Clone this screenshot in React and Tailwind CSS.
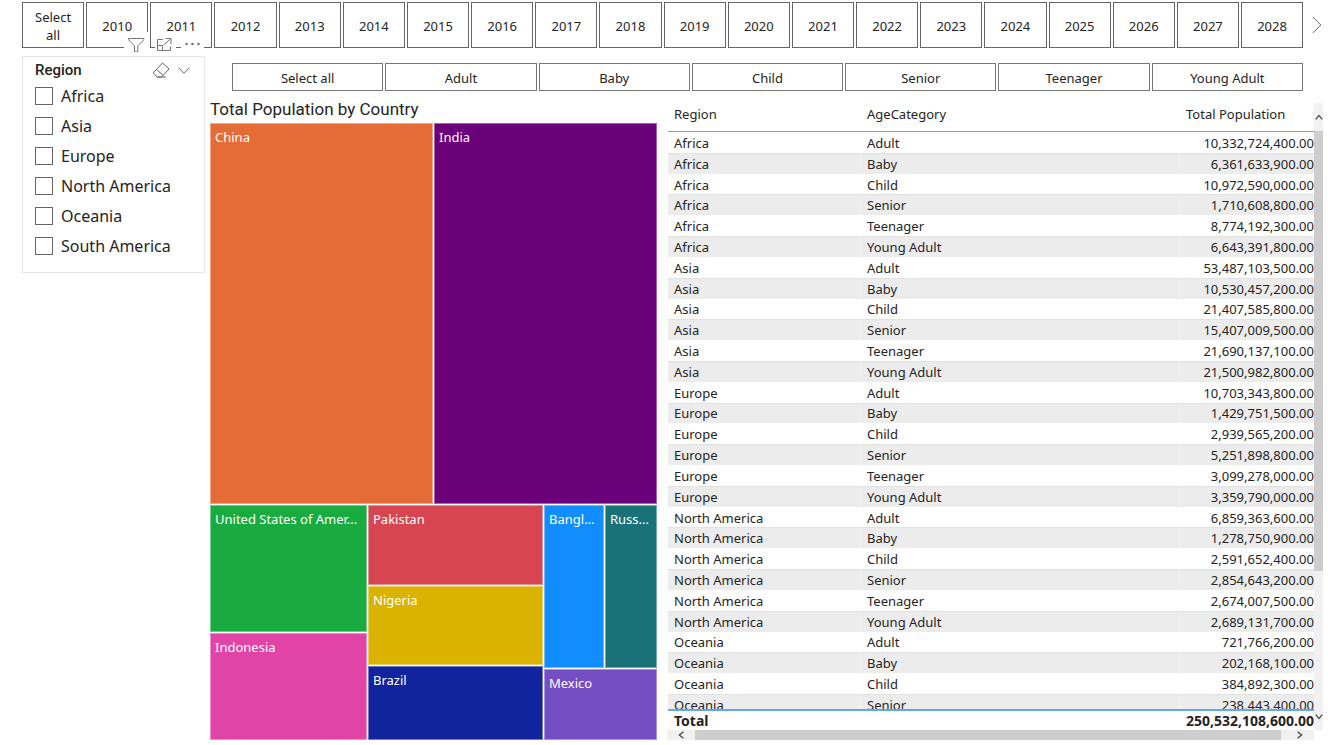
const years = Array.from({ length: 19 }, (_, i) => String(2010 + i));
const ages = ["Select all", "Adult", "Baby", "Child", "Senior", "Teenager", "Young Adult"];
const regions = ["Africa", "Asia", "Europe", "North America", "Oceania", "South America"];

const rows = [
  ["Africa", "Adult", "10,332,724,400.00"],
  ["Africa", "Baby", "6,361,633,900.00"],
  ["Africa", "Child", "10,972,590,000.00"],
  ["Africa", "Senior", "1,710,608,800.00"],
  ["Africa", "Teenager", "8,774,192,300.00"],
  ["Africa", "Young Adult", "6,643,391,800.00"],
  ["Asia", "Adult", "53,487,103,500.00"],
  ["Asia", "Baby", "10,530,457,200.00"],
  ["Asia", "Child", "21,407,585,800.00"],
  ["Asia", "Senior", "15,407,009,500.00"],
  ["Asia", "Teenager", "21,690,137,100.00"],
  ["Asia", "Young Adult", "21,500,982,800.00"],
  ["Europe", "Adult", "10,703,343,800.00"],
  ["Europe", "Baby", "1,429,751,500.00"],
  ["Europe", "Child", "2,939,565,200.00"],
  ["Europe", "Senior", "5,251,898,800.00"],
  ["Europe", "Teenager", "3,099,278,000.00"],
  ["Europe", "Young Adult", "3,359,790,000.00"],
  ["North America", "Adult", "6,859,363,600.00"],
  ["North America", "Baby", "1,278,750,900.00"],
  ["North America", "Child", "2,591,652,400.00"],
  ["North America", "Senior", "2,854,643,200.00"],
  ["North America", "Teenager", "2,674,007,500.00"],
  ["North America", "Young Adult", "2,689,131,700.00"],
  ["Oceania", "Adult", "721,766,200.00"],
  ["Oceania", "Baby", "202,168,100.00"],
  ["Oceania", "Child", "384,892,300.00"],
  ["Oceania", "Senior", "238,443,400.00"],
];

function Chevron({ d, className, viewBox = "0 0 10 10", strokeWidth = 1 }) {
  return (
    <svg viewBox={viewBox} className={className} fill="none" stroke="currentColor" strokeWidth={strokeWidth} aria-hidden="true">
      <path d={d} />
    </svg>
  );
}

function YearSlicer() {
  return (
    <div className="flex items-center pt-[2px] pl-[22px]">
      <div className="flex flex-1 gap-[2px]">
        {["Select all", ...years].map((y) => (
          <button
            key={y}
            className="flex h-[46px] min-w-0 flex-1 items-center justify-center border border-[#666] px-2 pt-px text-[13px] leading-[18px]"
          >
            {y}
          </button>
        ))}
      </div>
      <button aria-label="Next years" className="flex w-[25px] shrink-0 justify-center pl-[2px] text-[#666]">
        <Chevron className="h-[18px] w-[10px]" viewBox="0 0 10 18" d="M.8 1l8 8-8 8" />
      </button>
    </div>
  );
}

function RegionSlicer() {
  return (
    <section className="relative h-[217px] w-[183px] shrink-0 border border-[#e6e6e6] pr-[14px] pl-3">
      <div className="absolute -top-[25px] right-0 flex h-5 text-[#777]">
        <button aria-label="Filters" className="mr-[7px] w-6 bg-white">
          <svg viewBox="0 0 24 20" className="h-5 w-6" fill="none" stroke="currentColor" aria-hidden="true">
            <path d="M4.500 6.500h15.300v1.300l-6 6v6h-3.300v-6l-6-6z" />
          </svg>
        </button>
        <button aria-label="Focus mode" className="mr-[5px] w-[21px] bg-white">
          <svg viewBox="0 0 21 20" className="h-5 w-[21px]" fill="none" stroke="currentColor" aria-hidden="true">
            <path d="M8 7.500H2.500v11h13v-4M2.500 13.500h5v5M8.500 13l7-6M10.500 6.500h5.500v5.500" />
          </svg>
        </button>
        <button aria-label="More options" className="w-[23px] bg-white">
          <svg viewBox="0 0 23 20" className="h-5 w-[23px]" fill="currentColor" aria-hidden="true">
            <circle cx="5.500" cy="12" r="1.300" />
            <circle cx="11.500" cy="12" r="1.300" />
            <circle cx="17.500" cy="12" r="1.300" />
          </svg>
        </button>
      </div>
      <div className="flex h-[24px] items-center pt-[2px]">
        <h2 className="flex-1 font-['Roboto',sans-serif] text-[15px] leading-5 font-medium">Region</h2>
        <button aria-label="Clear selections" className="mr-2 text-[#666]">
          <svg viewBox="0 0 18 16" className="h-4 w-[18px]" fill="none" stroke="currentColor" aria-hidden="true">
            <path d="M10.500 1l6.500 6-7.500 8H5.300L1.200 11zM4.500 7.500l6.800 6M5.300 15h8.500" />
          </svg>
        </button>
        <button aria-label="Collapse" className="text-[#666]">
          <Chevron className="h-[7px] w-3" viewBox="0 0 12 7" d="M.5.7L6 6.200 11.500.7" />
        </button>
      </div>
      {regions.map((r) => (
        <label key={r} className="flex h-[30px] items-center gap-2 text-[16px]">
          <input type="checkbox" className="h-[18px] w-[18px] appearance-none border border-[#666] bg-white" />
          {r}
        </label>
      ))}
    </section>
  );
}

function Tile({ name, color }) {
  return (
    <div className={`min-h-0 min-w-0 overflow-hidden border border-white/40 px-1 pt-[4px] text-[13px] leading-[18px] whitespace-nowrap text-white ${color}`}>
      {name}
    </div>
  );
}

function Treemap() {
  return (
    <section className="flex min-w-0 flex-[447] flex-col">
      <h2 className="pb-1 font-['Roboto',sans-serif] text-[17px] leading-5">Total Population by Country</h2>
      <div className="grid min-h-0 flex-1 grid-rows-[381fr_235fr] gap-px">
        <div className="grid min-h-0 grid-cols-2 gap-px">
          <Tile name="China" color="bg-[#e66c37]" />
          <Tile name="India" color="bg-[#6b007b]" />
        </div>
        <div className="grid min-h-0 grid-cols-[157fr_175fr_113fr] gap-px">
          <div className="grid min-h-0 grid-rows-[127fr_107fr] gap-px">
            <Tile name="United States of Amer..." color="bg-[#1aab40]" />
            <Tile name="Indonesia" color="bg-[#e044a7]" />
          </div>
          <div className="grid min-h-0 grid-rows-[80fr_79fr_74fr] gap-px">
            <Tile name="Pakistan" color="bg-[#d64550]" />
            <Tile name="Nigeria" color="bg-[#d9b300]" />
            <Tile name="Brazil" color="bg-[#12239e]" />
          </div>
          <div className="grid min-h-0 grid-rows-[163fr_71fr] gap-px">
            <div className="grid min-h-0 grid-cols-[60fr_52fr] gap-px">
              <Tile name="Bangl..." color="bg-[#118dff]" />
              <Tile name="Russ..." color="bg-[#197278]" />
            </div>
            <Tile name="Mexico" color="bg-[#744ec2]" />
          </div>
        </div>
      </div>
    </section>
  );
}

function PopulationTable() {
  const head = "sticky top-0 h-[29px] border-b border-[#62a8ee] bg-white pt-0 pb-[6px] pl-[6px] text-left font-normal";
  const foot = "sticky bottom-0 h-[21px] border-t-2 border-[#62a8ee] bg-white";
  const cell = "border-t border-t-transparent p-0 group-even:border-t-[#e2e2e2]";
  return (
    <section className="mt-1 grid min-h-0 min-w-0 flex-[656] grid-cols-[1fr_9px] grid-rows-[1fr_10px]">
      <div className="ml-px min-h-0 overflow-hidden">
        <table className="h-[633px] w-full table-fixed border-separate border-spacing-0 text-[13px] leading-[18px]">
          <colgroup>
            <col className="w-[193px]" />
            <col />
            <col className="w-[134px]" />
          </colgroup>
          <thead>
            <tr>
              <th className={head}>Region</th>
              <th className={head}>AgeCategory</th>
              <th className={head}>Total Population</th>
            </tr>
          </thead>
          <tbody>
            {rows.map(([region, age, total]) => (
              <tr key={region + age} className="group even:bg-[#ececec]">
                <td className={`${cell} border-r border-r-white/40 pl-[6px]`}>{region}</td>
                <td className={`${cell} border-r border-r-white/40 pl-[6px]`}>{age}</td>
                <td className={`${cell} text-right`}>{total}</td>
              </tr>
            ))}
          </tbody>
          <tfoot className="text-[14px] font-bold">
            <tr>
              <td className={`${foot} p-0 pl-[6px]`}>Total</td>
              <td className={`${foot} p-0`}></td>
              <td className={`${foot} p-0 text-right`}>250,532,108,600.00</td>
            </tr>
          </tfoot>
        </table>
      </div>
      <div className="flex flex-col bg-[#f1f1f1] text-[#444]">
        <button aria-label="Scroll up" className="flex h-7 items-center justify-center">
          <Chevron className="h-2 w-2" strokeWidth={1.6} d="M1 8l4-5 4 5" />
        </button>
        <div className="flex-[440] bg-[#cdcdcd]" />
        <div className="flex-[132]" />
        <button aria-label="Scroll down" className="flex h-[27px] items-center justify-center">
          <Chevron className="h-2 w-2" strokeWidth={1.6} d="M1 2l4 5 4-5" />
        </button>
      </div>
      <div className="flex bg-[#f1f1f1] text-[#444]">
        <button aria-label="Scroll left" className="flex w-7 items-center justify-center">
          <Chevron className="h-2 w-2" strokeWidth={1.6} d="M8 1L3 5l5 4" />
        </button>
        <div className="flex-1 bg-[#cdcdcd]" />
        <button aria-label="Scroll right" className="flex w-[33px] items-center justify-center pl-1">
          <Chevron className="h-2 w-2" strokeWidth={1.6} d="M2 1l5 4-5 4" />
        </button>
      </div>
    </section>
  );
}

export default function App() {
  return (
    <div className="flex h-screen flex-col overflow-hidden bg-white pb-[5px] font-['Noto_Sans','Open_Sans',sans-serif] text-[#252423]">
      <YearSlicer />
      <div className="mt-2 flex min-h-0 flex-1 items-start pl-[22px]">
        <RegionSlicer />
        <main className="flex h-full min-w-0 flex-1 flex-col pt-[7px] pl-[5px]">
          <div className="flex gap-[2px] pr-[25px] pl-[22px]">
            {ages.map((a) => (
              <button key={a} className="h-7 min-w-0 flex-1 border border-[#777] pt-px text-[13px] leading-[18px]">
                {a}
              </button>
            ))}
          </div>
          <div className="mt-2 flex min-h-0 flex-1 gap-[10px] pr-[5px]">
            <Treemap />
            <PopulationTable />
          </div>
        </main>
      </div>
    </div>
  );
}
